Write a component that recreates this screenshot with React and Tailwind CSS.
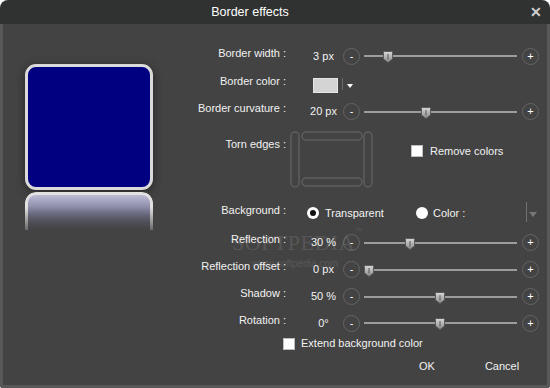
import React from 'react'

const sliders = {
  width: { value: '3 px', thumb: 19 },
  curvature: { value: '20 px', thumb: 57 },
  reflection: { value: '30 %', thumb: 41 },
  offset: { value: '0 px', thumb: 0 },
  shadow: { value: '50 %', thumb: 71 },
  rotation: { value: '0°', thumb: 71 },
}

const RoundButton = ({ children }) => (
  <div className="w-[17px] h-[17px] rounded-full border border-[#656565] flex items-center justify-center text-[11px] leading-none text-white">
    {children}
  </div>
)

const Thumb = () => (
  <svg width="10" height="12" viewBox="0 0 10 12">
    <defs>
      <linearGradient id="thumbFill" x1="0" y1="0" x2="0" y2="1">
        <stop offset="0" stopColor="#d8d8d8" />
        <stop offset="1" stopColor="#8a8a8a" />
      </linearGradient>
    </defs>
    <path d="M0.5 1.5 Q0.5 0.5 1.5 0.5 H8.5 Q9.5 0.5 9.5 1.5 V8 L5 11.5 L0.5 8 Z" fill="url(#thumbFill)" stroke="#5c5c5c" strokeWidth="1" />
    <line x1="5" y1="3" x2="5" y2="8.5" stroke="#555" strokeWidth="1" />
  </svg>
)

const Slider = ({ thumb }) => (
  <div className="flex items-center">
    <RoundButton>-</RoundButton>
    <div className="relative ml-[4px] w-[153px] h-[2px] bg-[#9c9c9c]">
      <div className="absolute top-[-4px]" style={{ left: thumb }}>
        <Thumb />
      </div>
    </div>
    <div className="ml-[5px]">
      <RoundButton>+</RoundButton>
    </div>
  </div>
)

const Label = ({ children }) => (
  <div className="w-[96px] text-right whitespace-nowrap pb-[6px]">{children}</div>
)

const SliderRow = ({ label, data, height }) => (
  <div className={`flex items-center ${height}`}>
    <Label>{label}</Label>
    <div className="w-[57px] pl-[18px] text-center whitespace-nowrap">{data.value}</div>
    <Slider thumb={data.thumb} />
  </div>
)

const Checkbox = () => (
  <div className="w-[12px] h-[12px] bg-white border border-[#bdbdbd]" />
)

const Radio = ({ checked }) => (
  <div className="w-[12px] h-[12px] rounded-full bg-white flex items-center justify-center">
    {checked && <div className="w-[6px] h-[6px] rounded-full bg-[#111]" />}
  </div>
)

const TornEdges = () => (
  <svg width="84" height="57" viewBox="0 0 84 57" fill="none" stroke="#5f5f5f" strokeWidth="1.5">
    <rect x="1" y="1" width="8" height="55" rx="4" />
    <rect x="12" y="1" width="60" height="8" rx="4" />
    <rect x="74" y="1" width="8" height="55" rx="4" />
    <rect x="12" y="47" width="60" height="8" rx="4" />
  </svg>
)

export default function App() {
  return (
    <div className="w-[550px] h-[388px] bg-white font-['Liberation_Sans',Arial,sans-serif] text-[11px] text-[#f2f2f2]">
      <div className="relative w-full h-full flex flex-col rounded-t-[8px] rounded-b-[3px] overflow-hidden">
        <div className="h-[24px] bg-[#303231] flex items-center">
          <div className="flex-1 text-center pl-[0px] pr-[30px] text-[12.5px] text-white">Border effects</div>
          <div className="w-[10px] mr-[10px] text-[14px] font-bold leading-none text-[#cfcfcf]">✕</div>
        </div>
        <div className="flex-1 flex bg-[#434343] border-x-[3px] border-b-[3px] border-[#585858]">
          <div className="w-[187px] pl-[22px] pt-[40px]">
            <div className="w-[128px] h-[126px] rounded-[11px] border-[3px] border-[#dadada] bg-[#000080] shadow-[0_2px_10px_rgba(0,0,0,0.45)]" />
            <div className="mt-[2px] w-[128px] h-[38px] rounded-t-[11px] border-x-[3px] border-t-[3px] border-[#e2e2e2] bg-gradient-to-b from-[#bcbcd6] via-[#7a7a96] to-[#45454f] [mask-image:linear-gradient(to_bottom,black_40%,rgba(0,0,0,0.25))]" />
          </div>
          <div className="flex-1 flex flex-col pt-[18px]">
            <SliderRow label="Border width :" data={sliders.width} height="h-[28px]" />
            <div className="flex items-center h-[28px]">
              <Label>Border color :</Label>
              <div className="ml-[27px] mt-[3px] w-[25px] h-[15px] bg-[#d4d4d4] border border-[#e6e6e6]" />
              <div className="ml-[4px] w-px h-[12px] bg-[#6a6a6a]" />
              <div className="ml-[4px] mt-[4px] w-0 h-0 border-x-[3px] border-t-[4px] border-x-transparent border-t-white" />
            </div>
            <SliderRow label="Border curvature :" data={sliders.curvature} height="h-[27px]" />
            <div className="flex items-start h-[72px]">
              <div className="w-[96px] text-right mt-[12px] leading-[14px]">Torn edges :</div>
              <div className="ml-[4px] mt-[6px]">
                <TornEdges />
              </div>
              <div className="ml-[37px] mt-[18px] flex items-center gap-[7px]">
                <Checkbox />
                <span>Remove colors</span>
              </div>
            </div>
            <div className="flex items-center h-[32px]">
              <Label>Background :</Label>
              <div className="ml-[21px] w-[109px] flex items-center gap-[6px]">
                <Radio checked />
                <span>Transparent</span>
              </div>
              <div className="flex items-center gap-[5px]">
                <Radio />
                <span>Color :</span>
              </div>
              <div className="ml-auto w-px h-[20px] bg-[#737373] -mt-[2px]" />
              <div className="ml-[2px] mr-[10px] mt-[3px] w-0 h-0 border-x-[4px] border-t-[5px] border-x-transparent border-t-[#777777]" />
            </div>
            <SliderRow label="Reflection :" data={sliders.reflection} height="h-[27px]" />
            <SliderRow label="Reflection offset :" data={sliders.offset} height="h-[27px]" />
            <SliderRow label="Shadow :" data={sliders.shadow} height="h-[27px]" />
            <SliderRow label="Rotation :" data={sliders.rotation} height="h-[26px]" />
            <div className="flex items-center h-[15px] pl-[93px] gap-[6px]">
              <Checkbox />
              <span>Extend background color</span>
            </div>
            <div className="flex items-center h-[31px] pl-[229px]">
              <span>OK</span>
              <span className="ml-[50px]">Cancel</span>
            </div>
          </div>
        </div>
        <div className="absolute left-[232px] top-[226px] font-['Liberation_Serif',serif] text-[22px] tracking-[0.5px] text-white/10 pointer-events-none">
          SOFTPEDIA<span className="text-[7px] align-top">™</span>
        </div>
        <div className="absolute left-[252px] top-[256px] text-[10px] text-white/10 pointer-events-none">www.softpedia.com</div>
      </div>
    </div>
  )
}
